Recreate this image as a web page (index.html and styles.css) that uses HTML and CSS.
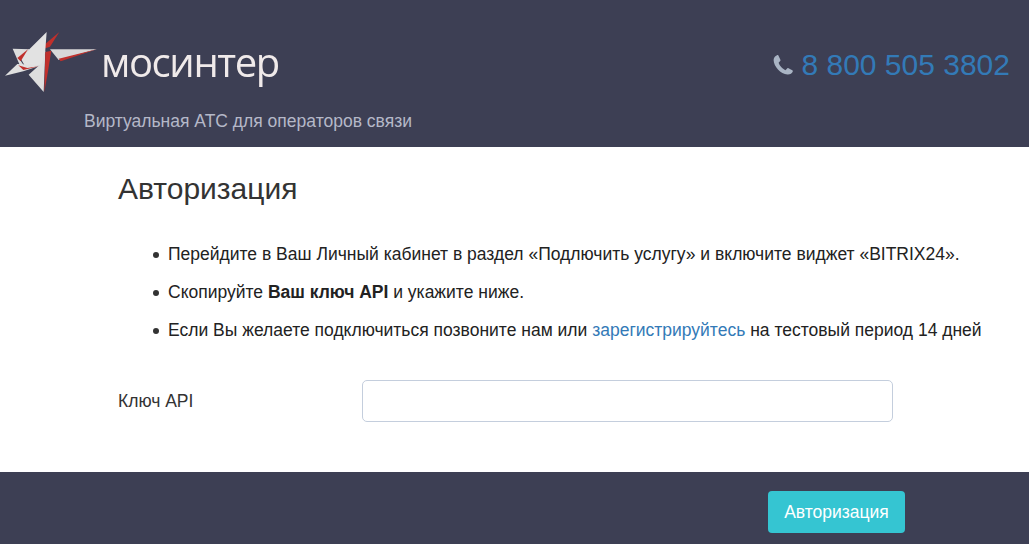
FILE: index.html
```html
<!DOCTYPE html>
<html lang="ru">
<head>
    <meta charset="UTF-8">
    <meta name="viewport" content="width=device-width, initial-scale=1.0">
    <title>Авторизация</title>
    <link rel="stylesheet" href="styles.css">
</head>
<body>
    <header class="header">
        <div class="header-top">
            <div class="logo">
                <svg class="logo-star" width="100" height="68" viewBox="0 0 300 204">
                    <polygon points="178,12 112,68 150,56" fill="#c0302c"/>
                    <polygon points="140,12 88,64 60,88 76,116 132,110 136,66" fill="#e2e2e2"/>
                    <polygon points="38,62 90,64 58,92 78,122 62,118" fill="#dcdcdc"/>
                    <polygon points="84,64 52,90 62,100" fill="#c0302c"/>
                    <polygon points="15,143 52,108 124,112 70,130" fill="#e0e0e0"/>
                    <polygon points="55,112 82,120 120,114 70,126" fill="#c0302c"/>
                    <polygon points="86,140 126,104 136,68 131,192" fill="#dedede"/>
                    <polygon points="154,68 136,72 133,192 144,130" fill="#c0302c"/>
                    <polygon points="290,64 150,64 176,96" fill="#d8d8d8"/>
                    <polygon points="290,64 176,92 182,100" fill="#c0302c"/>
                </svg>
                <span class="logo-text">мосинтер</span>
            </div>
            <div class="phone">
                <svg class="phone-icon" width="22" height="22" viewBox="0 0 22 22">
                    <path d="M5 1.2 C3.2 2 1.6 3.6 1.6 6 C1.8 12.5 8.5 20 15.5 20.6 C18 20.8 20 19.4 20.8 17.6 C21 17 20.8 16.6 20.3 16.3 L16.5 14.2 C16 14 15.6 14 15.2 14.4 L13.4 16.2 C10.5 15 7.5 11.5 6.6 8.8 L8.2 7 C8.6 6.6 8.6 6.2 8.4 5.7 L6.4 1.6 C6.1 1.1 5.6 1 5 1.2 Z" fill="#a9b4c4"/>
                </svg>
                <a class="phone-link" href="#">8 800 505 3802</a>
            </div>
        </div>
        <div class="tagline">Виртуальная АТС для операторов связи</div>
    </header>
    <main class="content">
        <h1 class="title">Авторизация</h1>
        <ul class="steps">
            <li>Перейдите в Ваш Личный кабинет в раздел «Подлючить услугу» и включите виджет «BITRIX24».</li>
            <li>Скопируйте <b>Ваш ключ API</b> и укажите ниже.</li>
            <li>Если Вы желаете подключиться позвоните нам или <a href="#">зарегистрируйтесь</a> на тестовый период 14 дней</li>
        </ul>
        <div class="form-row">
            <label class="form-label" for="apiKey">Ключ API</label>
            <input class="form-input" type="text" id="apiKey">
        </div>
    </main>
    <footer class="footer">
        <button class="submit" type="button">Авторизация</button>
    </footer>
</body>
</html>
```
FILE: styles.css
```css
html, body {
    height: 100%;
}
body {
    margin: 0;
    display: flex;
    flex-direction: column;
    font-family: "Liberation Sans", Arial, sans-serif;
    font-size: 17.5px;
    color: #333;
    background-color: #fff;
}
a {
    color: #337ab7;
    text-decoration: none;
}
.header {
    height: 147px;
    box-sizing: border-box;
    padding: 28px 19px 0 0;
    background-color: #3d3f54;
}
.header-top {
    display: flex;
    justify-content: space-between;
    align-items: flex-start;
}
.logo {
    display: flex;
    align-items: flex-start;
    height: 68px;
}
.logo-star {
    filter: blur(0.4px);
}
.logo-text {
    margin: 10px 0 0 1px;
    font-family: "Open Sans", sans-serif;
    font-size: 40px;
    line-height: 48px;
    letter-spacing: -1.4px;
    color: #f0eaea;
    filter: blur(0.4px);
}
.phone {
    display: flex;
    align-items: center;
    gap: 7px;
    margin-top: 16px;
}
.phone-link {
    font-size: 30px;
    line-height: 42px;
}
.tagline {
    margin: 15px 0 0 84px;
    line-height: 20px;
    color: #b5b8c8;
}
.content {
    flex: 1;
    padding: 0 0 0 118px;
}
.title {
    margin: 24px 0 0;
    font-size: 30px;
    font-weight: 400;
    line-height: 36px;
    color: #333;
}
.steps {
    margin: 36px 0 0;
    padding: 0 0 0 50px;
    line-height: 22px;
    color: #222;
    list-style: none;
}
.steps li {
    position: relative;
    margin-bottom: 16px;
}
.steps li::before {
    content: "";
    position: absolute;
    left: -15px;
    top: 9px;
    width: 6px;
    height: 6px;
    border-radius: 50%;
    background-color: #333;
}
.form-row {
    display: flex;
    align-items: center;
    margin-top: 39px;
}
.form-label {
    width: 244px;
}
.form-input {
    width: 531px;
    height: 42px;
    box-sizing: border-box;
    border: 1px solid #c4cedd;
    border-radius: 5px;
    background-color: #fff;
}
.footer {
    height: 72px;
    box-sizing: border-box;
    padding: 19px 124px 0 0;
    display: flex;
    justify-content: flex-end;
    align-items: flex-start;
    background-color: #3d3f54;
}
.submit {
    width: 137px;
    height: 42px;
    padding: 0;
    border: none;
    border-radius: 4px;
    background-color: #35c5d2;
    color: #fff;
    font-family: inherit;
    font-size: 17.5px;
}
```
